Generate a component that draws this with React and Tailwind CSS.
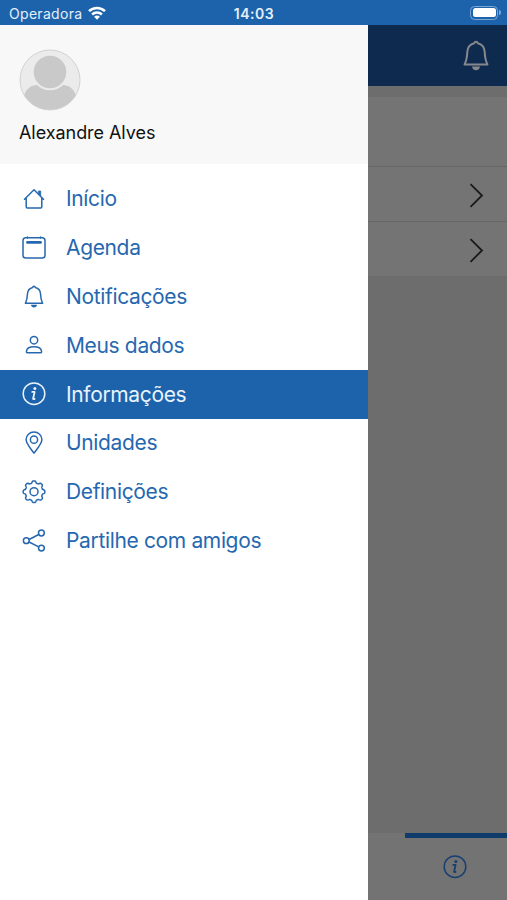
import React from "react";

// Gear outline with eight soft teeth
const gearPath = () => {
  const points = [];
  for (let i = 0; i < 160; i++) {
    const a = (i / 160) * Math.PI * 2;
    const r = 9.8 + 1.05 * Math.tanh(2 * Math.cos(8 * a));
    points.push(
      `${(12 + r * Math.sin(a)).toFixed(2)} ${(11.7 - r * Math.cos(a)).toFixed(2)}`,
    );
  }
  return `M${points.join("L")}Z`;
};

function Icon({ children, className = "size-6" }) {
  return (
    <svg
      viewBox="0 0 24 24"
      className={`${className} shrink-0`}
      fill="none"
      stroke="currentColor"
      strokeWidth="1.5"
      strokeLinecap="round"
      strokeLinejoin="round"
    >
      {children}
    </svg>
  );
}

const HomeIcon = () => (
  <Icon>
    <path d="M2.5 12.2 12 2.8l9.5 9.4M4.2 10.8v9q0 1.1 1.1 1.1h13.4q1.1 0 1.1-1.1v-9" />
    <path d="M16.7 4h2v4.8l-2-2z" fill="currentColor" strokeWidth="0.8" />
  </Icon>
);

const CalendarIcon = () => (
  <Icon>
    <rect x="1" y="1.7" width="22" height="20.3" rx="2.8" />
    <path d="M5.5 .9v1M18.5 .9v1" />
    <path d="M5.4 6.4h13.2" strokeWidth="2.6" />
  </Icon>
);

const BellShape = () => (
  <>
    <path d="M12 1.3c.8 0 1.2.5 1.3 1.1 3.2.7 5 3 5.2 6.4.2 4.5.6 6.7 2.1 9.5H3.4c1.5-2.8 1.9-5 2.1-9.5.2-3.4 2-5.7 5.2-6.4.1-.6.5-1.1 1.3-1.1Z" />
    <path
      d="M9 19.8h6c-.2 1.7-1.4 2.8-3 2.8s-2.8-1.1-3-2.8Z"
      fill="currentColor"
      stroke="none"
    />
  </>
);

const BellIcon = () => (
  <Icon>
    <BellShape />
  </Icon>
);

const PersonIcon = () => (
  <Icon>
    <circle cx="12" cy="7.2" r="3.7" />
    <path d="M5.3 19.7q-1-.1-.9-1.2c.3-3.3 3.8-4.7 7.6-4.7s7.3 1.4 7.6 4.7q.1 1.1-.9 1.2Z" />
  </Icon>
);

const InfoShape = () => (
  <>
    <circle cx="12" cy="11.7" r="10.8" />
    <circle cx="12.9" cy="6.5" r="1.5" fill="currentColor" stroke="none" />
    <path d="M10.3 9.9h2.3l-1.5 6.8q-.1.9 1.5.2" strokeWidth="1.8" />
  </>
);

const InfoIcon = () => (
  <Icon>
    <InfoShape />
  </Icon>
);

const PinIcon = () => (
  <Icon>
    <path d="M12 22.1c-3.7-4.8-7.9-9.4-7.9-13.5a7.9 7.6 0 0 1 15.8 0C19.9 12.7 15.7 17.3 12 22.1Z" />
    <circle cx="12" cy="8.7" r="3.6" />
  </Icon>
);

const GearIcon = () => (
  <Icon>
    <path d={gearPath()} />
    <circle cx="12" cy="11.7" r="4" />
  </Icon>
);

const ShareIcon = () => (
  <Icon>
    <circle cx="4.3" cy="11.7" r="2.9" />
    <circle cx="19.4" cy="4" r="2.9" />
    <circle cx="19.4" cy="19.1" r="2.9" />
    <path d="m7.1 10.5 9.6-5M7.1 13l9.6 4.9" />
  </Icon>
);

const menuItems = [
  { label: "Início", icon: HomeIcon },
  { label: "Agenda", icon: CalendarIcon },
  { label: "Notificações", icon: BellIcon },
  { label: "Meus dados", icon: PersonIcon },
  { label: "Informações", icon: InfoIcon, active: true },
  { label: "Unidades", icon: PinIcon },
  { label: "Definições", icon: GearIcon },
  { label: "Partilhe com amigos", icon: ShareIcon },
];

function StatusBar() {
  return (
    <div className="grid h-[25px] grid-cols-3 items-center bg-[#1d63ac] pl-[9px] pr-[6px] pt-[2px] text-[#e4effa]">
      <div className="flex items-center gap-[6px]">
        <span className="pb-px text-[14px] tracking-[0.3px]">Operadora</span>
        <svg
          viewBox="0 0 18 14"
          className="mb-[2px] h-[14px] w-[18px]"
          fill="none"
          stroke="#ffffff"
          strokeWidth="2.5"
        >
          <path d="M1 5.2a11.5 11.5 0 0 1 16 0M4.1 8.5a7.1 7.1 0 0 1 9.8 0" />
          <path
            d="M9 13.7 6.1 10.8a4.2 4.2 0 0 1 5.8 0Z"
            fill="#ffffff"
            stroke="none"
          />
        </svg>
      </div>
      <span className="pr-[2px] text-center text-[14px] font-semibold tracking-[0.5px]">
        14:03
      </span>
      <div className="flex items-center justify-end gap-px pb-[2px]">
        <div className="h-[14px] w-[28px] rounded-[4.5px] border border-[#7ba5d2] p-[1.5px]">
          <div className="h-full rounded-[2.5px] bg-white" />
        </div>
        <div className="h-[5px] w-[2px] rounded-r-full bg-[#7ba5d2]" />
      </div>
    </div>
  );
}

function Avatar() {
  return (
    <svg viewBox="0 0 62 62" className="size-[62px]">
      <defs>
        <clipPath id="avatar">
          <circle cx="31" cy="31" r="30" />
        </clipPath>
      </defs>
      <circle cx="31" cy="31" r="30" fill="#ebebeb" />
      <g clipPath="url(#avatar)" fill="#c9c9c9">
        <path d="M4 50c2-9 7-14 14-14 3.5 3.5 8 5.3 13 5.3S40.500 39.500 44 36c7 0 12 5 14 14v13H4Z" />
        <circle cx="31" cy="23" r="16.3" />
      </g>
      <circle cx="31" cy="31" r="30" fill="none" stroke="#d2d2d2" />
    </svg>
  );
}

function SideMenu() {
  return (
    <aside className="w-[368px] shrink-0 bg-white">
      <div className="h-[139px] bg-[#f8f8f8] pl-[19px] pt-[24px]">
        <Avatar />
        <p className="mt-[10px] text-[18px] leading-[24px] tracking-[-0.05px] text-[#111111]">
          Alexandre Alves
        </p>
      </div>

      <nav className="pt-[10.6px]">
        {menuItems.map((item) => (
          <a
            key={item.label}
            className={`flex h-[48.8px] items-center gap-5 pl-[22px] text-[21px] tracking-[-0.35px] ${
              item.active ? "bg-[#1d63ac] text-[#e9f3fd]" : "text-[#2668b0]"
            }`}
          >
            <item.icon />
            <span className="pt-[0.5px]">{item.label}</span>
          </a>
        ))}
      </nav>
    </aside>
  );
}

function ChevronRow() {
  return (
    <div className="flex h-[55px] items-center justify-end border-t border-[#676767] bg-[#747474] pr-[23px] pt-[2px]">
      <svg
        viewBox="0 0 15 25"
        className="h-[25px] w-[15px]"
        fill="none"
        stroke="#1a1a1a"
        strokeWidth="1.8"
      >
        <path d="M1.5 1.2 13 12.5 1.5 23.8" />
      </svg>
    </div>
  );
}

function PageBehind() {
  return (
    <main className="flex flex-1 flex-col bg-[#6d6d6d]">
      <header className="flex h-[61px] items-center justify-end bg-[#0e2b4f] pr-[15px] text-[#85888c]">
        <Icon className="size-[32px]">
          <BellShape />
        </Icon>
      </header>
      <div className="mt-[11px] h-[69px] bg-[#747474]" />
      <ChevronRow />
      <ChevronRow />
      <footer className="mt-auto flex h-[67px] flex-col bg-[#737373]">
        <div className="ml-[37px] h-[5px] bg-[#103c6c]" />
        <div className="flex flex-1 items-center pb-[4px] pl-[75px] text-[#173f73]">
          <Icon>
            <InfoShape />
          </Icon>
        </div>
      </footer>
    </main>
  );
}

function App() {
  return (
    <div className="flex h-[900px] w-[507px] flex-col overflow-hidden font-['Inter',sans-serif]">
      <StatusBar />
      <div className="flex flex-1">
        <SideMenu />
        <PageBehind />
      </div>
    </div>
  );
}

export default App;
